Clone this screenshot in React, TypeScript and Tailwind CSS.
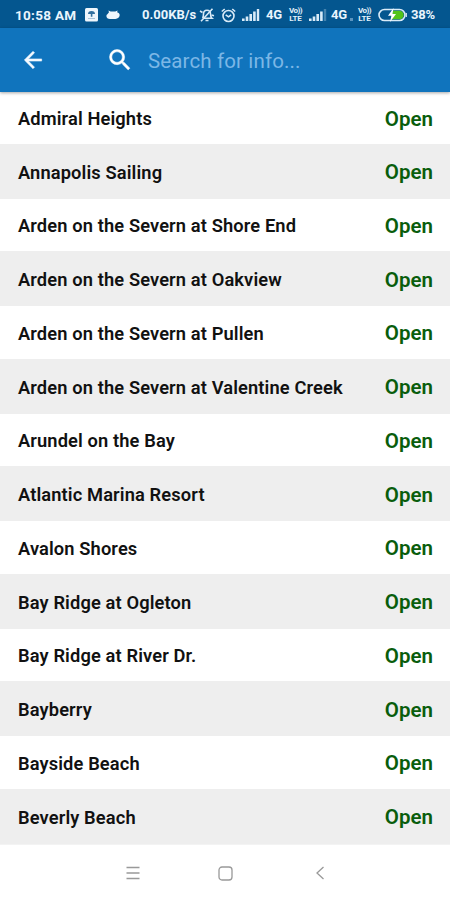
const locations = [
  'Admiral Heights',
  'Annapolis Sailing',
  'Arden on the Severn at Shore End',
  'Arden on the Severn at Oakview',
  'Arden on the Severn at Pullen',
  'Arden on the Severn at Valentine Creek',
  'Arundel on the Bay',
  'Atlantic Marina Resort',
  'Avalon Shores',
  'Bay Ridge at Ogleton',
  'Bay Ridge at River Dr.',
  'Bayberry',
  'Bayside Beach',
  'Beverly Beach',
]

function Signal({ faded = false }: { faded?: boolean }) {
  return (
    <svg width="18" height="13" viewBox="0 0 18 13" fill="#d9ebf8">
      <rect x="0" y="9.5" width="2.6" height="2.5" />
      <rect x="3.7" y="7.5" width="2.6" height="4.5" />
      <rect x="7.4" y="5" width="2.6" height="7" />
      <rect x="11.1" y="2.5" width="2.6" height="9.5" />
      <rect x="14.8" y="0" width="2.4" height="12" opacity={faded ? 0.3 : 1} />
    </svg>
  )
}

function VoLte() {
  return (
    <div className="flex w-[15px] flex-col items-center text-[8px] leading-[8px] font-bold text-[#e3f1fb]">
      <span className="tracking-[-0.5px]">Vo))</span>
      <span className="tracking-[-0.2px]">LTE</span>
    </div>
  )
}

function StatusBar() {
  return (
    <div className="flex h-[28px] items-center bg-[#04568f] pt-[2px] pl-[15px] text-[13px] font-bold whitespace-nowrap text-[#eaf5fd]">
      <span className="w-[70px] text-[13.5px] tracking-[0.3px]">10:58 AM</span>
      <svg width="13" height="14" viewBox="0 0 13 14">
        <rect width="13" height="13.5" rx="1.5" fill="#eef6fc" />
        <path d="M3 6a3.500 3 0 0 1 7 0zM5.800 6h1.600v2.800H5.800z" fill="#32709f" />
        <path d="M3 10.500h7" stroke="#a9c5da" />
      </svg>
      <svg className="ml-2" width="14" height="12" viewBox="0 0 14 12">
        <path
          d="M3 3.200 2.400 1.600l2.300.9h4.600l2.300-.9-.5 1.700c1.600.5 2.600 1.500 2.600 2.800 0 2.300-1.900 3.900-4.300 3.900H3.900C1.900 10 .4 8.800.4 7c0-1 .5-1.600 1.200-2.100z"
          fill="#eef6fc"
        />
      </svg>
      <span className="ml-[22px] w-[57px] text-[13px]">0.00KB/s</span>
      <svg width="16" height="14" viewBox="0 0 16 14" fill="none" stroke="#d9ebf8" strokeWidth="1.600">
        <path d="M3.500 10c1-1 1-2 1-4C4.500 3.600 5.800 2.200 8 2.200s3.500 1.400 3.500 3.800c0 2 0 3 1.500 4.300H4M6.500 12.500h3" />
        <path d="M13.500.8 2 13.200M1 3l2.500 1.500M12.500 7l2.500.8" />
      </svg>
      <svg className="ml-[6px]" width="15" height="15" viewBox="0 0 15 15" fill="none" stroke="#d9ebf8" strokeWidth="1.600">
        <circle cx="7.500" cy="8" r="5.500" />
        <path d="M.8 3.500 3.700 1M14.200 3.500 11.300 1M4.700 6.800l2.800 2 2.600-2" />
      </svg>
      <div className="ml-[6px] flex w-[24px]">
        <Signal />
      </div>
      <span className="w-[22px] tracking-[-0.3px]">4G</span>
      <VoLte />
      <div className="ml-[6px] flex w-[22px]">
        <Signal faded />
      </div>
      <span className="w-[19px] tracking-[-0.3px]">4G</span>
      <span className="mt-2 mr-1 h-[3px] w-[3px] bg-[#5b94bf]" />
      <VoLte />
      <svg className="ml-[6px]" width="29" height="14" viewBox="0 0 29 14">
        <rect x="1" y="1.500" width="26" height="11" rx="5.500" fill="#04568f" stroke="#d9ebf8" strokeWidth="1.600" />
        <path d="M15 2.800h6.500a4.200 4.200 0 0 1 0 8.400H13z" fill="#52c41a" />
        <path d="M28.300 5v4" stroke="#d9ebf8" strokeWidth="1.200" />
        <path d="M15.500 0 10 7.800h3.400L12 14l6-8h-3.500z" fill="#fff" />
      </svg>
      <span className="ml-1 tracking-[-0.2px]">38%</span>
    </div>
  )
}

function SearchHeader() {
  return (
    <header className="relative flex h-[64px] items-center bg-[#1074bd] pl-[20px] shadow-[0_1px_3px_rgba(0,0,0,0.35)]">
      <svg width="26" height="26" viewBox="0 0 24 24" fill="#f5faff" stroke="#f5faff" strokeWidth="0.500">
        <path d="M20 11H7.830l5.590-5.590L12 4l-8 8 8 8 1.410-1.410L7.830 13H20v-2z" />
      </svg>
      <svg className="ml-[60px]" width="28" height="28" viewBox="0 0 24 24" fill="#fff" stroke="#fff" strokeWidth="0.400">
        <path d="M15.500 14h-.79l-.28-.27A6.471 6.471 0 0 0 16 9.500 6.500 6.500 0 1 0 9.500 16c1.610 0 3.090-.59 4.230-1.570l.27.28v.79l5 4.990L20.490 19l-4.990-5zm-6 0C7.010 14 5 11.990 5 9.500S7.010 5 9.500 5 14 7.010 14 9.500 11.990 14 9.500 14z" />
      </svg>
      <span className="mt-[2px] ml-[14px] text-[20.500px] tracking-[0.13px] text-[#7cb7e6]">Search for info...</span>
    </header>
  )
}

export default function App() {
  return (
    <div className="flex h-[900px] w-[450px] flex-col overflow-hidden bg-white font-['Roboto',sans-serif]">
      <StatusBar />
      <SearchHeader />
      <ul className="h-[752px] shrink-0">
        {locations.map((name) => (
          <li
            key={name}
            className="flex h-[52.250px] items-center justify-between pt-[2.500px] pr-[17px] pl-[18px] first:h-[51.500px] even:h-[55.250px] even:bg-[#eeeeee]"
          >
            <span className="text-[18.300px] font-semibold tracking-[0.12px] text-[#111]">{name}</span>
            <span className="text-[20.500px] font-semibold text-[#095d0c]">Open</span>
          </li>
        ))}
      </ul>
      <nav className="flex grow items-center border-t border-[#f3f3f3] pt-px pl-[126px] text-[#999]">
        <svg width="14" height="14" viewBox="0 0 14 14" stroke="currentColor" strokeWidth="1.300">
          <path d="M.5 1.500h13M.5 7h13M.5 12.500h13" />
        </svg>
        <svg className="ml-[78px]" width="15" height="15" viewBox="0 0 15 15" fill="none" stroke="currentColor" strokeWidth="1.300">
          <rect x="1" y="1" width="13" height="13" rx="3" />
        </svg>
        <svg className="ml-[83px]" width="8" height="14" viewBox="0 0 8 14" fill="none" stroke="currentColor" strokeWidth="1.300">
          <path d="M7.500 1 1 7l6.500 6" />
        </svg>
      </nav>
    </div>
  )
}
